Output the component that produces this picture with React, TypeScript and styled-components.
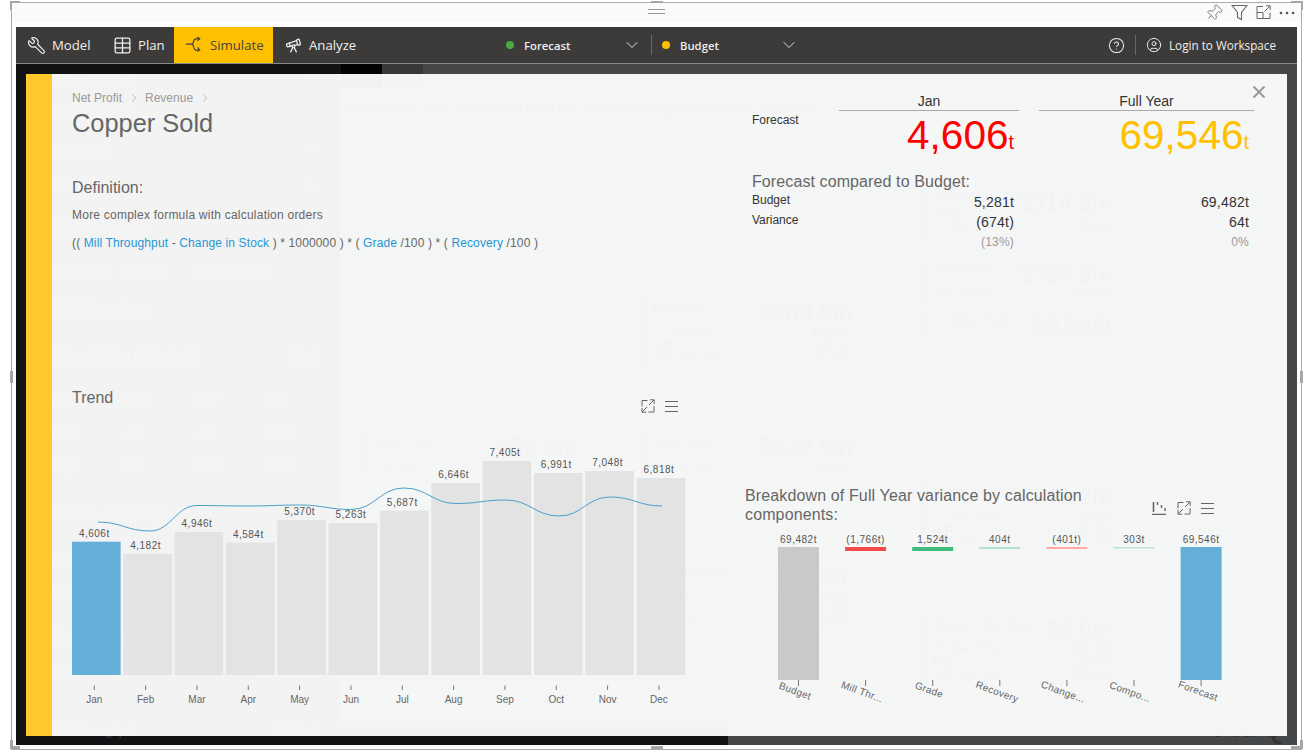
import React from "react";
import styled, { createGlobalStyle } from "styled-components";
import { Wrench, Table, Telescope, CircleHelp, CircleUser, ChevronDown, Pin, ChevronRight, X, ChevronUp } from "lucide-react";

const Global = createGlobalStyle`
  html, body { margin: 0; padding: 0; background: #fff; overflow: hidden; }
  body { font-family: "Liberation Sans", Arial, sans-serif; }
  * { box-sizing: border-box; }
`;

const Frame = styled.div`
  position: relative;
  width: 1291px;
  height: 748px;
  margin: 2px 3px 0 11px;
  border: 1px solid #aaa;
  padding: 0 4px 4px;
  display: flex;
  flex-direction: column;
  background: #fff;
`;
const Handle = styled.span<{ $x: number; $y: number; $w: number; $h: number }>`
  position: absolute;
  left: ${(p) => p.$x}px;
  top: ${(p) => p.$y}px;
  width: ${(p) => p.$w}px;
  height: ${(p) => p.$h}px;
  background: #a6a6a6;
`;
const VisualHeader = styled.div`
  height: 24px;
  flex: none;
  margin: 0 -4px;
  padding: 0 4px 5px;
  display: flex;
  background: linear-gradient(#fafafa 19px, #fff 19px);
  align-items: center;
  justify-content: flex-end;
  position: relative;
`;
const Grip = styled.span`
  position: absolute;
  left: 636px;
  top: 6px;
  width: 17px;
  height: 5px;
  border-top: 1px solid #999;
  border-bottom: 1px solid #999;
`;
const HeaderIcons = styled.div`
  display: flex;
  align-items: center;
  gap: 8px;
  margin-right: 2px;
  color: #666;
  & svg { display: block; }
`;

const Nav = styled.nav`
  height: 37px;
  flex: none;
  display: flex;
  align-items: stretch;
  background: #3c3b39;
  border-bottom: 1px solid #8a8a8a;
  color: #eee;
  font-family: "Open Sans", "Noto Sans", sans-serif;
`;
const NavItem = styled.div<{ $active?: boolean; $w: number }>`
  display: flex;
  align-items: center;
  gap: 7px;
  width: ${(p) => p.$w}px;
  padding-left: 12px;
  font-size: 13.2px;
  background: ${(p) => (p.$active ? "#ffc000" : "transparent")};
  color: ${(p) => (p.$active ? "#444" : "#eee")};
  & svg { flex: none; }
`;
const Selector = styled.div<{ $w: number; $ml?: number }>`
  display: flex;
  align-items: center;
  width: ${(p) => p.$w}px;
  margin-left: ${(p) => p.$ml ?? 0}px;
  font-size: 11.3px;
  font-weight: 600;
`;
const Dot = styled.span<{ $c: string }>`
  width: 8px;
  height: 8px;
  border-radius: 50%;
  margin-right: 10px;
  background: ${(p) => p.$c};
  flex: none;
`;
const SelectorLabel = styled.span`
  flex: 1;
`;
const NavSep = styled.span<{ $ml: number; $mr: number }>`
  width: 1px;
  height: 20px;
  align-self: center;
  margin: 0 ${(p) => p.$mr}px 0 ${(p) => p.$ml}px;
  background: #666;
`;
const NavRight = styled.div`
  display: flex;
  align-items: center;
  margin-left: auto;
  padding-right: 21px;
  font-size: 11.7px;
  gap: 0;
`;
const LoginIcon = styled.span`
  display: flex;
  margin-right: 7px;
`;

const Stage = styled.div`
  position: relative;
  flex: 1;
  display: flex;
  min-height: 0;
  overflow: hidden;
  background: #fff;
`;
const Sidebar = styled.aside`
  width: 325px;
  flex: none;
  background: #404040;
  color: rgba(255, 255, 255, 0.8);
  padding: 7px 24px 0 37px;
  display: flex;
  flex-direction: column;
`;
const SideRow = styled.div<{ $h: number; $size?: number }>`
  height: ${(p) => p.$h}px;
  flex: none;
  display: flex;
  justify-content: space-between;
  align-items: flex-start;
  font-size: ${(p) => p.$size ?? 12}px;
  line-height: 20px;
`;
const MonthRow = styled(SideRow)`
  display: grid;
  grid-template-columns: repeat(4, 72px);
`;
const Main = styled.main`
  position: relative;
  flex: 1;
  background: #fff;
  color: #000;
`;
const TabRow = styled.div`
  display: flex;
  height: 24px;
`;
const Tab = styled.span<{ $c: string }>`
  width: 41px;
  height: 24px;
  background: ${(p) => p.$c};
`;
const Hint = styled.div`
  margin: 8px 0 0 6px;
  font-size: 14px;
  line-height: 24px;
  color: #333;
  white-space: nowrap;
`;
const Node = styled.div<{ $x: number; $y: number; $w?: number }>`
  position: absolute;
  left: ${(p) => p.$x - 341}px;
  top: ${(p) => p.$y - 64}px;
  width: ${(p) => p.$w ?? 220}px;
  border-left: 5px solid #aaa;
  padding: 4px 8px;
  color: #333;
  font-size: 13px;
  display: grid;
  grid-template-columns: 1fr auto;
`;
const NodeValue = styled.div`
  font-size: 24px;
  line-height: 26px;
  text-align: right;
`;
const NodeLine = styled.div`
  grid-column: 1 / 3;
  display: flex;
  justify-content: space-between;
  line-height: 13px;
  font-size: 12px;
`;
const Logo = styled.div`
  position: absolute;
  right: 10px;
  bottom: 2px;
  font-size: 38px;
  color: #bbb;
  line-height: 38px;
`;
const Footer = styled.div`
  position: absolute;
  left: 0;
  bottom: 0;
  width: 387px;
  height: 24px;
  background: #404040;
`;
const Backdrop = styled.div`
  position: absolute;
  inset: 0;
  background: rgba(0, 3, 6, 0.73);
`;

const Modal = styled.section`
  position: absolute;
  left: 10px;
  top: 10px;
  right: 10px;
  bottom: 9px;
  display: flex;
  background: linear-gradient(
    90deg,
    rgba(255, 255, 255, 0.95) 315px,
    rgba(254, 255, 255, 0.95) 315px
  );
  color: #666;
`;
const Strip = styled.div`
  width: 26px;
  flex: none;
  background: #ffc92e;
`;
const Content = styled.div`
  flex: 1;
  display: grid;
  grid-template-columns: 673px 1fr;
  padding: 17px 0 22px 20px;
  min-width: 0;
`;
const Column = styled.div`
  display: flex;
  flex-direction: column;
  min-width: 0;
`;
const Crumbs = styled.div`
  display: flex;
  align-items: center;
  gap: 4.5px;
  height: 14px;
  font-size: 12px;
  color: #999;
`;
const Title = styled.h1`
  margin: 3px 0 0;
  font-size: 25.4px;
  line-height: 30px;
  font-weight: 400;
  color: #666;
`;
const SectionTitle = styled.h2`
  margin: 0;
  font-size: 16px;
  line-height: 18px;
  font-weight: 400;
  color: #666;
`;
const DefinitionTitle = styled(SectionTitle)`
  margin-top: 41px;
`;
const DefText = styled.p<{ $ls: number; $mt: number }>`
  margin: ${(p) => p.$mt}px 0 0;
  font-size: 12px;
  line-height: 18px;
  color: #666;
  letter-spacing: ${(p) => p.$ls}px;
`;
const Link = styled.span`
  color: #1f97d4;
`;
const ChartHead = styled.div`
  margin-top: auto;
  width: 606px;
  height: 26px;
  padding-top: 1px;
  display: flex;
  justify-content: space-between;
  align-items: flex-start;
`;
const ChartIcons = styled.div`
  display: flex;
  align-items: center;
  gap: 10px;
  margin-top: 10px;
  & svg { display: block; }
`;
const ChartSvg = styled.svg`
  display: block;
  flex: none;
`;
const Kpi = styled.div`
  display: grid;
  grid-template-columns: 87px 180px 20px 215px;
  grid-auto-rows: 20px;
  padding-left: 7px;
  color: #333;
`;
const KpiHead = styled.div<{ $col: number }>`
  grid-column: ${(p) => p.$col};
  grid-row: 1;
  height: 19.5px;
  font-size: 14px;
  line-height: 20px;
  text-align: center;
  border-bottom: 1px solid #aaa;
`;
const KpiLabel = styled.div`
  grid-column: 1;
  font-size: 12px;
  line-height: 18px;
  color: #333;
`;
const BigRow = styled.div`
  grid-column: 1 / -1;
  grid-row: span 3;
  display: grid;
  grid-template-columns: 87px 180px 20px 215px;
`;
const BigValue = styled.div<{ $col: number; $c: string }>`
  grid-column: ${(p) => p.$col};
  text-align: right;
  padding-right: 5px;
  font-size: 40.5px;
  line-height: 48px;
  color: ${(p) => p.$c};
  & small { font-size: 20px; }
`;
const CompareTitle = styled(SectionTitle)`
  grid-column: 1 / -1;
  margin-top: 2px;
  letter-spacing: 0.1px;
`;
const Value = styled.div<{ $col: number; $muted?: boolean }>`
  grid-column: ${(p) => p.$col};
  text-align: right;
  padding-right: 5px;
  font-size: ${(p) => (p.$muted ? 12 : 14)}px;
  line-height: 22px;
  letter-spacing: 0.2px;
  color: ${(p) => (p.$muted ? "#999" : "#333")};
`;
const BreakHead = styled.div`
  margin-top: auto;
  width: 469px;
  display: flex;
  justify-content: space-between;
  align-items: flex-end;
`;
const BreakTitle = styled.h2`
  margin: 0;
  width: 360px;
  font-size: 16px;
  line-height: 19px;
  font-weight: 400;
  color: #666;
  letter-spacing: 0.13px;
`;
const BreakIcons = styled(ChartIcons)`
  margin: 0 0 9px;
`;
const Close = styled.div`
  position: absolute;
  right: 18px;
  top: 8px;
  color: #999;
  & svg { display: block; }
`;

const Expand = () => (
  <svg width="14" height="14" viewBox="0 0 14 14" fill="none" stroke="#666" strokeWidth="1">
    <path d="M6.5 1.5H1v6M13 7v6H7.5M8 6l5-5M9 .8h4.2V5M6 8l-5 5M1 9v4.2h4.2" />
  </svg>
);
const Burger = () => (
  <svg width="13" height="13" viewBox="0 0 13 13" stroke="#666" strokeWidth="1.2">
    <path d="M0 1.5h13M0 6.5h13M0 11.5h13" />
  </svg>
);
const SortIcon = () => (
  <svg width="15" height="14" viewBox="0 0 15 14" fill="none" stroke="#666">
    <path d="M0 13.5h14M1.5 1v10" strokeWidth="1.6" />
    <path d="M5.5 1v3M9.5 4v3M13 7v3" strokeWidth="1.4" />
  </svg>
);
const SimulateIcon = () => (
  <svg width="17" height="18" viewBox="0 0 18 18" fill="none" stroke="#444" strokeWidth="1.3">
    <path d="M0 8h5.5c1.7 0 2.2-1 2.5-2.5C8.4 3.5 9.5 2.5 11 2.5h3M5.5 8c1.7 0 2.2 1 2.5 2.5C8.4 12.7 9.5 14.5 11 14.5h3" />
    <path d="M12 .5l2.5 2-2.500 2M12.500 11.500l2 3-3 1" />
  </svg>
);

const months = ["Jan", "Feb", "Mar", "Apr", "May", "Jun", "Jul", "Aug", "Sep", "Oct", "Nov", "Dec"];
const barData = [
  { v: "4,606t", top: 541.7 }, { v: "4,182t", top: 554 }, { v: "4,946t", top: 532 }, { v: "4,584t", top: 542.6 },
  { v: "5,370t", top: 520 }, { v: "5,263t", top: 523 }, { v: "5,687t", top: 510.7 }, { v: "6,646t", top: 483 },
  { v: "7,405t", top: 461 }, { v: "6,991t", top: 473 }, { v: "7,048t", top: 471 }, { v: "6,818t", top: 478 },
];
const linePts: [number, number][] = [
  [98, 522], [150, 531], [197, 505.5], [249, 506], [300, 505], [351, 509.5],
  [404, 488], [456, 503.5], [506, 500], [559, 516], [610, 497], [662, 506],
];
function smooth(pts: [number, number][]) {
  let d = `M${pts[0][0]} ${pts[0][1]}`;
  for (let i = 0; i < pts.length - 1; i++) {
    const [x0, y0] = pts[i];
    const [x1, y1] = pts[i + 1];
    const dx = (x1 - x0) * 0.45;
    const prev = pts[i - 1] ?? pts[i];
    const next = pts[i + 2] ?? pts[i + 1];
    const flat = (a: number, b: number, c: number) => ((b - a) * (c - b) <= 0 ? 0 : (c - a) / 2);
    const m0 = flat(prev[1], y0, y1) * 0.45;
    const m1 = flat(y0, y1, next[1]) * 0.45;
    d += ` C${x0 + dx} ${y0 + m0} ${x1 - dx} ${y1 - m1} ${x1} ${y1}`;
  }
  return d;
}

const wf = [
  { n: "Budget", v: "69,482t", c: "#c8c9c8", h: 133, lx: 794, ly: 694 },
  { n: "Mill Thr...", v: "(1,766t)", c: "#f44a4a", h: 4, lx: 861, ly: 695 },
  { n: "Grade", v: "1,524t", c: "#3fbb7b", h: 4, lx: 928, ly: 693 },
  { n: "Recovery", v: "404t", c: "#b2e2c9", h: 2, lx: 996, ly: 695 },
  { n: "Change...", v: "(401t)", c: "#ffabab", h: 2, lx: 1062, ly: 695 },
  { n: "Compo...", v: "303t", c: "#bce5cf", h: 1.5, lx: 1129, ly: 695 },
  { n: "Forecast", v: "69,546t", c: "#64afd7", h: 133, lx: 1197, ly: 694 },
];

const TrendChart = () => (
  <ChartSvg width="640" height="300" viewBox="72 414 640 300" fontFamily='"Liberation Sans", Arial, sans-serif'>
    {barData.map((b, i) => {
      const x = 72 + i * 51.33;
      const cx = x + 22.3;
      return (
        <g key={months[i]}>
          <rect x={x} y={b.top} width={48.6} height={675 - b.top} fill={i === 0 ? "#64afd7" : "#e2e3e2"} />
          <text x={cx} y={b.top - 5} textAnchor="middle" fontSize="10" letterSpacing="0.5" fill="#555">{b.v}</text>
          <path d={`M${cx} 685.5v4.5`} stroke="#777" strokeWidth="1" />
          <text x={cx} y={703} textAnchor="middle" fontSize="10" fill="#666">{months[i]}</text>
        </g>
      );
    })}
    <path d={smooth(linePts)} fill="none" stroke="#4a9fcc" strokeWidth="1" />
  </ChartSvg>
);

const WaterfallChart = () => (
  <ChartSvg width="540" height="190" viewBox="745 524 540 190" fontFamily='"Liberation Sans", Arial, sans-serif'>
    {wf.map((b, i) => {
      const x = 778 + i * 67.1;
      const cx = x + 20.5;
      return (
        <g key={b.n}>
          <rect x={x} y={547} width={41} height={b.h} fill={b.c} />
          <text x={cx} y={543} textAnchor="middle" fontSize="10" letterSpacing="0.5" fill="#555">{b.v}</text>
          <path d={`M${cx} 680v6`} stroke="#777" strokeWidth="1" />
          <text x={b.lx} y={b.ly} textAnchor="middle" fontSize="10" letterSpacing="0.3" fill="#666" transform={`rotate(20 ${b.lx} ${b.ly})`}>{b.n}</text>
        </g>
      );
    })}
  </ChartSvg>
);

const GhostNode = (p: { x: number; y: number; w?: number; t: string; v: string; lines?: [string, string][] }) => (
  <Node $x={p.x} $y={p.y} $w={p.w}>
    <span>{p.t}</span>
    <NodeValue>{p.v}</NodeValue>
    {p.lines?.map((l) => (
      <NodeLine key={l[0]}><span>{l[0]}</span><span>{l[1]}</span></NodeLine>
    ))}
  </Node>
);

export default function App() {
  return (
    <>
      <Global />
      <Frame>
        <Handle $x={-2} $y={-2} $w={10} $h={3} />
        <Handle $x={-2} $y={-2} $w={3} $h={9} />
        <Handle $x={1279} $y={-2} $w={10} $h={3} />
        <Handle $x={1288} $y={-2} $w={3} $h={9} />
        <Handle $x={-2} $y={737} $w={3} $h={9} />
        <Handle $x={-2} $y={743} $w={10} $h={3} />
        <Handle $x={1288} $y={737} $w={3} $h={9} />
        <Handle $x={1279} $y={743} $w={10} $h={3} />
        <Handle $x={639} $y={-2} $w={12} $h={3} />
        <Handle $x={639} $y={743} $w={12} $h={3} />
        <Handle $x={-2} $y={368} $w={3} $h={12} />
        <Handle $x={1288} $y={368} $w={3} $h={12} />
        <VisualHeader>
          <Grip />
          <HeaderIcons>
            <Pin size={18} strokeWidth={1.1} style={{ transform: "rotate(45deg)" }} />
            <svg width="17" height="17" viewBox="0 0 17 17" fill="none" stroke="#666" strokeWidth="1.1">
              <path d="M1 1.5h15L10.5 8.5v7l-4-2v-5z" />
            </svg>
            <svg width="15" height="15" viewBox="0 0 15 15" fill="none" stroke="#666" strokeWidth="1">
              <path d="M7 1.5H1v12h13V8M1 7.5h6v6M8.5 6.5L14 1M10 .8h4.2V5" />
            </svg>
            <svg width="16" height="4" viewBox="0 0 16 4" fill="#555">
              <circle cx="2" cy="2" r="1.3" /><circle cx="8" cy="2" r="1.3" /><circle cx="14" cy="2" r="1.3" />
            </svg>
          </HeaderIcons>
        </VisualHeader>
        <Nav>
          <NavItem $w={86}><Wrench size={17} strokeWidth={1.5} style={{ transform: "scaleX(-1) scale(1.12)" }} />Model</NavItem>
          <NavItem $w={72}><Table size={17} strokeWidth={1.6} style={{ transform: "scale(1.15)" }} />Plan</NavItem>
          <NavItem $active $w={99}><SimulateIcon />Simulate</NavItem>
          <NavItem $w={95}><Telescope size={17} strokeWidth={1.8} />Analyze</NavItem>
          <Selector $w={136} $ml={138}>
            <Dot $c="#4aa847" />
            <SelectorLabel>Forecast</SelectorLabel>
            <ChevronDown size={20} strokeWidth={1.1} />
          </Selector>
          <NavSep $ml={9} $mr={10} />
          <Selector $w={137}>
            <Dot $c="#ffc000" />
            <SelectorLabel>Budget</SelectorLabel>
            <ChevronDown size={20} strokeWidth={1.1} />
          </Selector>
          <NavRight>
            <CircleHelp size={17} strokeWidth={1.5} />
            <NavSep $ml={10} $mr={10} />
            <LoginIcon><CircleUser size={16} strokeWidth={1.4} /></LoginIcon>
            Login to Workspace
          </NavRight>
        </Nav>
        <Stage>
          <Sidebar>
            <SideRow $h={33} $size={18}><span>Scenarios</span><ChevronUp size={14} /></SideRow>
            <SideRow $h={35} $size={14}><span>Scenarios (1)</span></SideRow>
            <SideRow $h={37}><span>Scenario 1</span><span>•••</span></SideRow>
            <SideRow $h={41}><span>Scenario 2</span><span>•••</span></SideRow>
            <SideRow $h={45} $size={18}><span>Sub Models</span><ChevronUp size={14} /></SideRow>
            <MonthRow $h={36} $size={14}><span>Net Profit</span><span>Mining</span><span>Processing</span></MonthRow>
            <SideRow $h={48} $size={14}><span>Mill Throughput</span></SideRow>
            <SideRow $h={43} $size={18}><span>Simulation Period</span><span>[to]</span></SideRow>
            <MonthRow $h={34}><span>Jan</span><span>Feb</span><span>Mar</span><span>Apr</span></MonthRow>
            <MonthRow $h={33}><span>May</span><span>Jun</span><span>Jul</span><span>Aug</span></MonthRow>
            <MonthRow $h={48}><span>Sep</span><span>Oct</span><span>Nov</span><span>Dec</span></MonthRow>
            <SideRow $h={44} $size={18}><span>Value Display</span></SideRow>
            <SideRow $h={33}><span>Month</span></SideRow>
            <SideRow $h={47}><span>0k</span></SideRow>
            <SideRow $h={35} $size={18}><span>Key Drivers</span></SideRow>
            <SideRow $h={58}><span>Copper Price</span><span>Avg. $0.4m</span></SideRow>
            <SideRow $h={20}><span>Mill Throughput</span><span>11.95m t</span></SideRow>
          </Sidebar>
          <Main>
            <TabRow><Tab $c="#000" /><Tab $c="#ccc" /></TabRow>
            <Hint>Hint: Hover over a node and drag the slider left or right to simulate changes</Hint>
            <GhostNode x={640} y={296} t="Revenue" v="$389.8m" lines={[["FY Var  8%", "$28.3m"], ["Mth", "$28.4m"], ["Mth Var (1%)", "($0.4m)"]]} />
            <GhostNode x={640} y={430} t="Total Cost" v="$332.9m" lines={[["FY Var  3%", "$8.9m"]]} />
            <GhostNode x={365} y={430} t="Net Profit" v="$56.8m" lines={[["FY Var", "$19.4m"]]} />
            <GhostNode x={920} y={186} w={200} t="Production Cost" v="$314.2m" lines={[["FY Var  3%", "$8.2m"]]} />
            <GhostNode x={925} y={258} w={195} t="Revenue" v="$389.8m" lines={[["FY Var  8%", "$28.3m"]]} />
            <GhostNode x={925} y={308} w={195} t="Copper Sold" v="69,546t" />
            <GhostNode x={920} y={480} w={200} t="Realisation Cost" v="$12.2m" lines={[["FY Var 13%", "$1.4m"], ["Mth", "$1.0m"], ["Mth Var", "$0.1m"]]} />
            <GhostNode x={920} y={612} w={200} t="Support Services" v="$6.6m" lines={[["FY Var (9%)", "($0.6m)"], ["Mth", "$0.5m"], ["Mth Var (7%)", "($0.1m)"]]} />
            <GhostNode x={640} y={560} w={215} t="General Note" v="$2,000" lines={[["FY Var", "(2,000)"], ["Mth", "$1,000"], ["Mth Var", "($1,000)"]]} />
            <Logo>valQ</Logo>
            <Footer />
          </Main>
          <Backdrop />
          <Modal>
            <Strip />
            <Content>
              <Column>
                <Crumbs>
                  Net Profit <ChevronRight size={14} strokeWidth={1.1} /> Revenue <ChevronRight size={14} strokeWidth={1.1} />
                </Crumbs>
                <Title>Copper Sold</Title>
                <DefinitionTitle>Definition:</DefinitionTitle>
                <DefText $ls={0.23} $mt={9}>More complex formula with calculation orders</DefText>
                <DefText $ls={0.13} $mt={10}>
                  (( <Link>Mill Throughput</Link> - <Link>Change in Stock</Link> ) * 1000000 ) * ( <Link>Grade</Link> /100 ) * ( <Link>Recovery</Link> /100 )
                </DefText>
                <ChartHead>
                  <SectionTitle>Trend</SectionTitle>
                  <ChartIcons><Expand /><Burger /></ChartIcons>
                </ChartHead>
                <TrendChart />
              </Column>
              <Column>
                <Kpi>
                  <KpiHead $col={2}>Jan</KpiHead>
                  <KpiHead $col={4}>Full Year</KpiHead>
                  <BigRow>
                    <KpiLabel>Forecast</KpiLabel>
                    <BigValue $col={2} $c="#ff0000">4,606<small>t</small></BigValue>
                    <BigValue $col={4} $c="#ffc000">69,546<small>t</small></BigValue>
                  </BigRow>
                  <CompareTitle>Forecast compared to Budget:</CompareTitle>
                  <KpiLabel>Budget</KpiLabel>
                  <Value $col={2}>5,281t</Value>
                  <Value $col={4}>69,482t</Value>
                  <KpiLabel>Variance</KpiLabel>
                  <Value $col={2}>(674t)</Value>
                  <Value $col={4}>64t</Value>
                  <Value $col={2} $muted>(13%)</Value>
                  <Value $col={4} $muted>0%</Value>
                </Kpi>
                <BreakHead>
                  <BreakTitle>Breakdown of Full Year variance by calculation components:</BreakTitle>
                  <BreakIcons><SortIcon /><Expand /><Burger /></BreakIcons>
                </BreakHead>
                <WaterfallChart />
              </Column>
            </Content>
            <Close><X size={20} strokeWidth={2.4} /></Close>
          </Modal>
        </Stage>
      </Frame>
    </>
  );
}
